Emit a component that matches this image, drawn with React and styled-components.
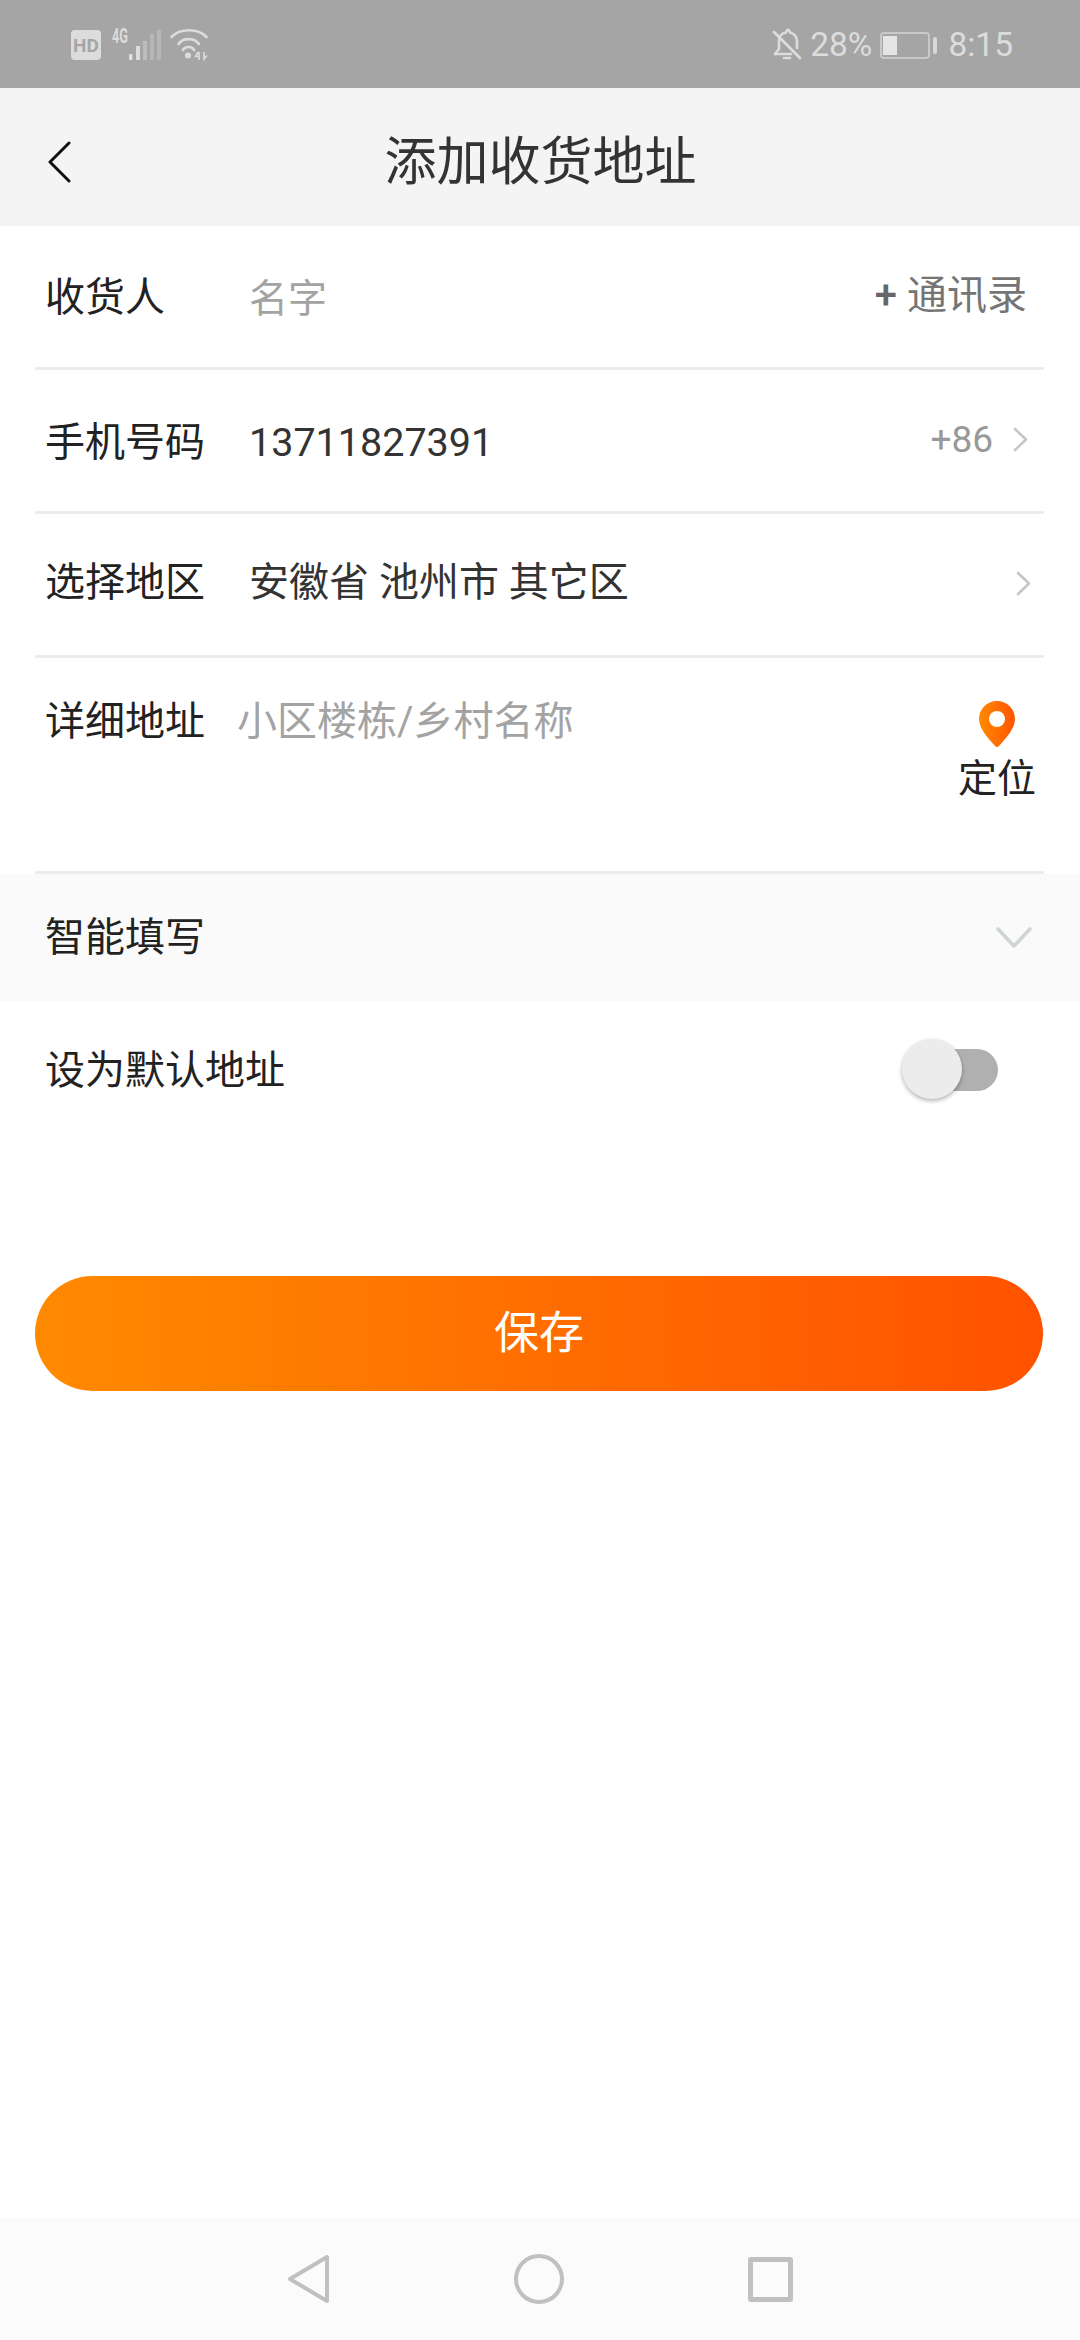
import React from "react";
import styled, { createGlobalStyle } from "styled-components";

const GlobalStyle = createGlobalStyle`
  html, body {
    margin: 0;
    padding: 0;
    background: #fff;
  }
  * {
    box-sizing: border-box;
  }
`;

const Arrow = ({ $end }) => (
  <ChevronWrap $end={$end}>
    <svg width="15" height="25" viewBox="0 0 15 25" fill="none" stroke="#c6c6c6" strokeWidth="2.6" strokeLinecap="round" strokeLinejoin="round">
      <path d="M2 2 L13 12.500 L2 23" />
    </svg>
  </ChevronWrap>
);

const App = () => {
  return (
    <Page>
      <GlobalStyle />
      <StatusBar>
        <svg width="140" height="46" viewBox="0 -6 140 46">
          <rect x="0" y="2" width="30" height="30" rx="4" fill="#dcdcdc" />
          <text x="15" y="23.500" textAnchor="middle" fontFamily="Roboto" fontWeight="700" fontSize="19" fill="#a5a5a5">HD</text>
          <text x="41" y="15" fontFamily="Roboto" fontWeight="700" fontSize="21" fill="#dcdcdc" textLength="16" lengthAdjust="spacingAndGlyphs">4G</text>
          <rect x="58" y="26" width="3.500" height="6" rx="1" fill="#e0e0e0" />
          <rect x="65" y="18" width="4" height="14" fill="#dcdcdc" />
          <rect x="72" y="13" width="4" height="19" fill="#bcbcbc" />
          <rect x="79" y="6" width="4" height="26" fill="#b6b6b6" />
          <rect x="86" y="2" width="4" height="30" fill="#b6b6b6" />
          <g fill="none" stroke="#dcdcdc" strokeWidth="2.700" strokeLinecap="round">
            <path d="M100.500 9 C109 0 127 0 135.500 9" />
            <path d="M107.500 16 C112 9.500 123 9.500 128 16" />
            <path d="M112 22 C114 18 121 18 123 22" />
          </g>
          <circle cx="117" cy="27.500" r="3" fill="#dcdcdc" />
          <path d="M127 24 L124.500 28.500 H128 M128 24 V32 M133 24 V31 L136 27.500" fill="none" stroke="#dcdcdc" strokeWidth="1.600" />
        </svg>
        <StatusRight>
          <svg width="30" height="34" viewBox="0 0 30 34" fill="none" stroke="#dcdcdc" strokeWidth="2.600" strokeLinecap="round" strokeLinejoin="round">
            <path d="M3 26 L7 21 V13 C7 8 10 5 14 4.500 C15 1 17 1 18 4.500 C22 5.500 25 8 25 14 V20" />
            <path d="M3 26 H19" />
            <path d="M12 30 H18" />
            <path d="M2 4 L28 30" />
          </svg>
          <StatusText>28%</StatusText>
          <Battery>
            <BatteryBody>
              <BatteryLevel />
            </BatteryBody>
            <BatteryCap />
          </Battery>
          <StatusText>8:15</StatusText>
        </StatusRight>
      </StatusBar>

      <Header>
        <BackIcon>
          <svg width="24" height="42" viewBox="0 0 24 42" fill="none" stroke="#111" strokeWidth="3" strokeLinecap="round" strokeLinejoin="round">
            <path d="M22 2 L3 21 L22 40" />
          </svg>
        </BackIcon>
        <Title>添加收货地址</Title>
      </Header>

      <Row>
        <Label $lift={3}>收货人</Label>
        <Placeholder>名字</Placeholder>
        <Contacts><b>+</b> 通讯录</Contacts>
      </Row>
      <Row>
        <Label>手机号码</Label>
        <Phone>13711827391</Phone>
        <Code>+86</Code>
        <Arrow $end={3} />
      </Row>
      <Row>
        <Label $lift={8}>选择地区</Label>
        <Value $lift={8}>安徽省 池州市 其它区</Value>
        <Arrow />
      </Row>
      <DetailRow>
        <Label>详细地址</Label>
        <DetailPlaceholder>小区楼栋/乡村名称</DetailPlaceholder>
        <Locate>
          <svg width="36" height="46" viewBox="0 0 36 46">
            <defs>
              <linearGradient id="pin" x1="0" y1="0" x2="1" y2="0">
                <stop offset="0" stopColor="#ff8a00" />
                <stop offset="1" stopColor="#ff5400" />
              </linearGradient>
            </defs>
            <path d="M18 0 C28 0 36 8 36 18 C36 28 26 38 20 45 C19 46.300 17 46.300 16 45 C10 38 0 28 0 18 C0 8 8 0 18 0 Z" fill="url(#pin)" />
            <circle cx="18" cy="18" r="8" fill="#fff" />
          </svg>
          <LocateText>定位</LocateText>
        </Locate>
      </DetailRow>

      <SmartRow>
        <Label $lift={8}>智能填写</Label>
        <svg width="36" height="22" viewBox="0 0 36 22" fill="none" stroke="#cfd5d0" strokeWidth="3.600" strokeLinecap="round" strokeLinejoin="round">
          <path d="M2 2 L18 19 L34 2" />
        </svg>
      </SmartRow>

      <DefaultRow>
        <DefaultLabel>设为默认地址</DefaultLabel>
        <Toggle>
          <Knob />
        </Toggle>
      </DefaultRow>

      <SaveButton>保存</SaveButton>

      <NavBar>
        <svg width="43" height="50" viewBox="0 0 43 50" fill="none" stroke="#c0c0c0" strokeWidth="4" strokeLinejoin="round">
          <path d="M40 3 V47 L3 25 Z" />
        </svg>
        <NavCircle />
        <NavSquare />
      </NavBar>
    </Page>
  );
};

export default App;

const Page = styled.div`
  width: 1080px;
  height: 2340px;
  display: flex;
  flex-direction: column;
  background: #fff;
  font-family: Roboto, "Noto Sans CJK SC", sans-serif;
  overflow: hidden;
`;

const StatusBar = styled.div`
  height: 88px;
  flex-shrink: 0;
  background: #a5a5a5;
  display: flex;
  align-items: center;
  justify-content: space-between;
  padding: 2px 67px 0 71px;
`;

const StatusRight = styled.div`
  display: flex;
  align-items: center;
  gap: 8px;
`;

const StatusText = styled.span`
  font-size: 33.5px;
  color: #dcdcdc;
  line-height: 40px;
`;

const Battery = styled.div`
  display: flex;
  align-items: center;
  gap: 3px;
  margin: 0 3px 0 0;
`;

const BatteryBody = styled.div`
  width: 50px;
  height: 27px;
  border: 2px solid #c9c9c9;
  border-radius: 4px;
  padding: 2px 1px;
`;

const BatteryLevel = styled.div`
  width: 14px;
  height: 100%;
  background: #e4e4e4;
`;

const BatteryCap = styled.div`
  width: 4px;
  height: 17px;
  background: #d8d8d8;
  border-radius: 2px;
`;

const Header = styled.div`
  height: 138px;
  flex-shrink: 0;
  background: #f4f4f4;
  display: flex;
  align-items: center;
  position: relative;
  justify-content: center;
`;

const BackIcon = styled.div`
  position: absolute;
  left: 47px;
  top: 53px;
  display: flex;
`;

const Title = styled.div`
  font-size: 52px;
  color: #333;
  margin-left: 1px;
`;

const Row = styled.div`
  height: 144px;
  flex-shrink: 0;
  margin: 0 36px 0 35px;
  padding: 0 13px 3px 10px;
  display: flex;
  align-items: center;
  border-bottom: 3px solid #ececec;
`;

const Label = styled.div`
  width: 204px;
  flex-shrink: 0;
  font-size: 40px;
  color: #222;
  margin-bottom: ${(p) => p.$lift || 0}px;
`;

const Placeholder = styled.div`
  flex: 1;
  font-size: 39px;
  color: #a3a3a3;
`;

const Value = styled.div`
  flex: 1;
  font-size: 40px;
  color: #333;
  margin-bottom: ${(p) => p.$lift || 0}px;
`;

const Phone = styled(Value)`
  font-size: 39.5px;
  margin-top: 6px;
`;

const Contacts = styled.div`
  font-size: 40px;
  color: #757575;
  margin: 0 4px 6px 0;
  b {
    font-weight: 500;
    color: #666;
  }
`;

const Code = styled.div`
  font-size: 37px;
  color: #999;
  margin-right: 20px;
`;

const ChevronWrap = styled.span`
  display: flex;
  margin-right: ${(p) => p.$end || 0}px;
`;

const DetailRow = styled.div`
  height: 216px;
  flex-shrink: 0;
  margin: 0 36px 0 35px;
  padding: 31px 8px 0 10px;
  display: flex;
  align-items: flex-start;
  border-bottom: 3px solid #ececec;
`;

const DetailPlaceholder = styled.div`
  flex: 1;
  font-size: 40px;
  color: #a3a3a3;
  margin-left: -12px;
`;

const Locate = styled.div`
  display: flex;
  flex-direction: column;
  align-items: center;
  margin-top: 12px;
`;

const LocateText = styled.div`
  font-size: 39px;
  color: #222;
  line-height: 56px;
  margin-top: 4px;
`;

const SmartRow = styled.div`
  height: 127px;
  flex-shrink: 0;
  background: #fafafa;
  padding: 0 48px 0 45px;
  display: flex;
  align-items: center;
  justify-content: space-between;
`;

const DefaultRow = styled.div`
  height: 140px;
  flex-shrink: 0;
  padding: 0 82px 0 45px;
  display: flex;
  align-items: center;
  justify-content: space-between;
`;

const DefaultLabel = styled.div`
  font-size: 40px;
  color: #222;
  margin-bottom: 8px;
`;

const Toggle = styled.div`
  width: 68px;
  height: 42px;
  border-radius: 21px;
  background: #b0b0b0;
  position: relative;
  margin-bottom: 2px;
`;

const Knob = styled.div`
  position: absolute;
  left: -28px;
  top: -10px;
  width: 60px;
  height: 60px;
  border-radius: 50%;
  background: #ececec;
  box-shadow: 0 2px 4px rgba(0, 0, 0, 0.3);
`;

const SaveButton = styled.div`
  width: 1008px;
  height: 115px;
  flex-shrink: 0;
  margin: 135px 0 0 35px;
  padding-bottom: 8px;
  border-radius: 58px;
  background: linear-gradient(90deg, #ff8a00 0%, #ff5200 100%);
  color: #fff;
  font-size: 45px;
  display: flex;
  align-items: center;
  justify-content: center;
`;

const NavBar = styled.div`
  margin-top: auto;
  height: 122px;
  flex-shrink: 0;
  background: #fbfbfb;
  display: flex;
  align-items: center;
  justify-content: center;
  gap: 184px;
`;

const NavCircle = styled.div`
  width: 50px;
  height: 50px;
  border-radius: 50%;
  border: 4px solid #c0c0c0;
`;

const NavSquare = styled.div`
  width: 45px;
  height: 45px;
  border-radius: 3px;
  border: 5px solid #c0c0c0;
`;
